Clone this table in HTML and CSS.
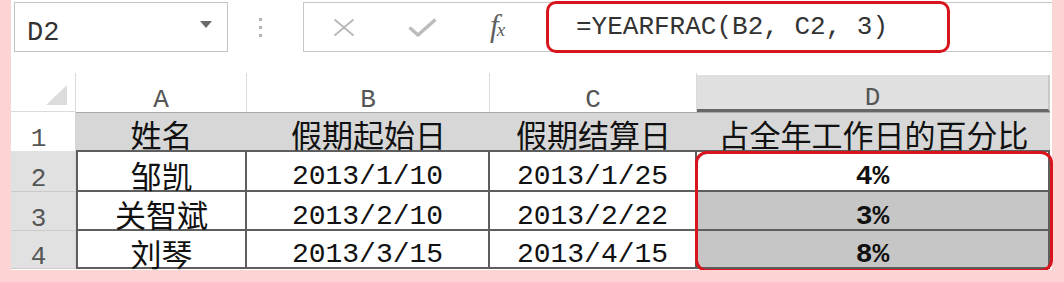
FILE: index.html
```html
<!DOCTYPE html>
<html lang="zh-CN">
<head>
<meta charset="utf-8">
<title>YEARFRAC</title>
<link rel="stylesheet" href="styles.css">
</head>
<body>
<div class="frame">
  <div class="toolbar">
    <div class="namebox"><span class="ref">D2</span><span class="caret"></span></div>
    <div class="sep"><i></i><i></i><i></i></div>
    <div class="fbar">
      <svg class="ix" width="22" height="19" viewBox="0 0 22 19"><path d="M1.5 1.5 L20.5 17.5 M20.5 1.5 L1.5 17.5" stroke="#b8b8b8" stroke-width="1.8" fill="none"/></svg>
      <svg class="iv" width="29" height="19" viewBox="0 0 29 19"><path d="M1.5 9.5 L10 17 L27.5 1.5" stroke="#bcbcbc" stroke-width="3.5" fill="none" stroke-linejoin="round"/></svg>
      <span class="fx"><i class="f">f</i><i class="x">x</i></span>
      <div class="formula">=YEARFRAC(B2, C2, 3)</div>
    </div>
  </div>
  <div class="sheet">
    <div class="grid">
      <div class="corner"><span class="tri"></span></div>
      <div class="ch">A</div>
      <div class="ch">B</div>
      <div class="ch">C</div>
      <div class="ch on">D</div>

      <div class="rh">1</div>
      <div class="t cj">姓名</div>
      <div class="t cj">假期起始日</div>
      <div class="t cj">假期结算日</div>
      <div class="t cj">占全年工作日的百分比</div>

      <div class="rh on">2</div>
      <div class="d first cj">邹凯</div>
      <div class="d num">2013/1/10</div>
      <div class="d num">2013/1/25</div>
      <div class="d pct">4%</div>

      <div class="rh on">3</div>
      <div class="d first cj">关智斌</div>
      <div class="d num">2013/2/10</div>
      <div class="d num">2013/2/22</div>
      <div class="d pct s">3%</div>

      <div class="rh on">4</div>
      <div class="d first cj">刘琴</div>
      <div class="d num">2013/3/15</div>
      <div class="d num">2013/4/15</div>
      <div class="d pct s">8%</div>
    </div>
    <div class="mark"></div>
  </div>
</div>
</body>
</html>
```
FILE: styles.css
```css
html, body { margin: 0; padding: 0; }
body { background: #fcd4d4; }

.frame {
  margin-left: 11px;
  width: 1041px;
  height: 270px;
  background: #fff;
}

/* ---------- formula toolbar ---------- */
.toolbar {
  display: flex;
  height: 50px;
  padding: 2px 0 0 3px;
}
.namebox {
  width: 214px;
  box-sizing: border-box;
  border: 1px solid #c4c4c4;
  display: flex;
  align-items: center;
  justify-content: space-between;
  padding: 12px 15px 0 12px;
}
.ref {
  font: 27px/1 "Liberation Mono", monospace;
  color: #333;
}
.caret {
  align-self: flex-start;
  margin-top: 6px;
  width: 0;
  height: 0;
  border-left: 6.5px solid transparent;
  border-right: 6.5px solid transparent;
  border-top: 7px solid #6a6a6a;
}
.sep {
  width: 3px;
  margin-left: 31px;
  display: flex;
  flex-direction: column;
  justify-content: center;
  gap: 5px;
}
.sep i { display: block; width: 3px; height: 3px; background: #b3b3b3; }

.fbar {
  flex: 1;
  margin-left: 41px;
  border: 1px solid #c6c6c6;
  border-right: 0;
  display: flex;
  align-items: center;
}
.ix { margin-left: 29px; flex: none; }
.iv { margin-left: 53px; flex: none; }
.fx {
  margin-left: 53px;
  width: 23px;
  display: flex;
  align-items: baseline;
  color: #606060;
  font-family: "Liberation Serif", serif;
  margin-top: -4px;
}
.fx i { font-style: italic; line-height: 1; }
.fx .f { font-size: 31px; }
.fx .x { font-size: 19px; margin-left: -2px; }

.formula {
  margin: -2px 0 -2px 33px;
  width: 404px;
  align-self: stretch;
  box-sizing: border-box;
  border: 3px solid #d8141c;
  border-radius: 10px;
  padding-left: 27px;
  display: flex;
  align-items: center;
  font: 26px/1 "Liberation Mono", monospace;
  color: #333;
  white-space: pre;
}

/* ---------- sheet ---------- */
.sheet {
  position: relative;
  margin-top: 21px;
}
.grid {
  display: grid;
  grid-template-columns: 65px 171px 243px 207px 353px;
  grid-template-rows: 39px 40px 40px 39px 38px;
}
.grid > div {
  box-sizing: border-box;
  display: flex;
  align-items: center;
  justify-content: center;
  white-space: nowrap;
}

.corner {
  border-right: 1px solid #dadada;
  border-bottom: 1px solid #dadada;
  position: relative;
}
.tri {
  position: absolute;
  right: 8px;
  bottom: 6px;
  width: 0;
  height: 0;
  border-left: 21px solid transparent;
  border-bottom: 20px solid #dcdcdc;
}

.ch {
  border-right: 1px solid #dadada;
  font: 26px/22px "Liberation Mono", monospace;
  color: #555;
  padding-top: 15px;
}
.ch.on {
  margin-top: 2px;
  background: #e0e0e0;
  border-bottom: 3px solid #676767;
  border-right: 2px solid #c9c9c9;
  padding-top: 12px;
}

.rh {
  border-right: 1px solid #d6d6d6;
  border-bottom: 1px solid #e2e2e2;
  font: 26px/22px "Liberation Mono", monospace;
  color: #555;
  padding: 15px 9px 0 0;
}
.rh.on {
  background: #e1e1e1;
  border-bottom: 1px solid #cbcbcb;
}

.cj {
  font: 31px/1 "Noto Sans CJK SC", sans-serif;
  color: #111;
}
.t {
  background: #d7d7d7;
  border-top: 1px solid #a8a8a8;
  border-bottom: 2px solid #5e5e5e;
  padding-top: 4px;
}
.d {
  background: #fff;
  border-right: 2px solid #5e5e5e;
  border-bottom: 2px solid #5e5e5e;
}
.d.cj { padding-top: 6px; }
.d.first { border-left: 2px solid #5e5e5e; }
.num {
  font: 28px/24px "Liberation Mono", monospace;
  color: #111;
  padding-top: 12px;
}
.pct {
  font: bold 28px/24px "Liberation Mono", monospace;
  color: #111;
  padding-top: 12px;
}
.d.s { background: #c6c6c6; }

.mark {
  position: absolute;
  left: 684px;
  top: 78px;
  width: 358px;
  height: 121px;
  box-sizing: border-box;
  border: 3px solid #d8141c;
  border-radius: 12px;
  pointer-events: none;
}
```
